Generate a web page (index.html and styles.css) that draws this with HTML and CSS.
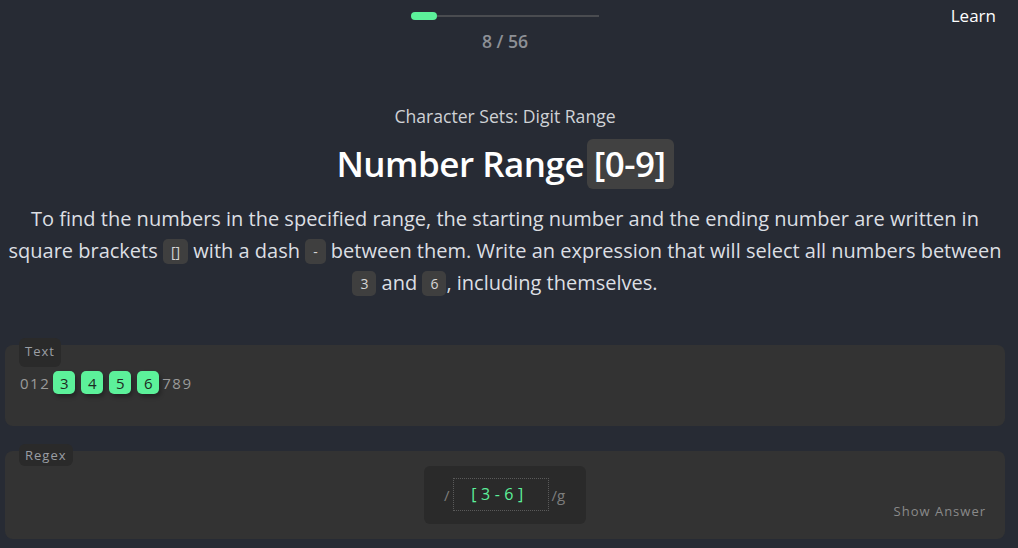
FILE: index.html
```html
<!DOCTYPE html>
<html>
<head>
<meta charset="utf-8">
<link rel="stylesheet" href="styles.css">
</head>
<body>
<header class="top">
  <div class="progress">
    <div class="track"><div class="fill" style="width:14%"></div></div>
    <div class="count">8 / 56</div>
  </div>
  <a class="learn">Learn</a>
</header>
<main class="lesson">
  <div class="subtitle">Character Sets: Digit Range</div>
  <h1 class="title">Number Range <code class="title-code">[0-9]</code></h1>
  <p class="desc">To find the numbers in the specified range, the starting number and the ending number are written in square brackets <code class="chip">[]</code> with a dash <code class="chip">-</code> between them. Write an expression that will select all numbers between <code class="chip">3</code> and <code class="chip">6</code>, including themselves.</p>
</main>
<section class="panel text-panel">
  <span class="label">Text</span>
  <div class="sample">012<mark class="hit">3</mark><mark class="hit">4</mark><mark class="hit">5</mark><mark class="hit">6</mark>789</div>
</section>
<section class="panel regex-panel">
  <span class="label">Regex</span>
  <div class="regex-box">
    <span class="slash">/</span>
    <span class="input">[3-6]</span>
    <span class="flags">/g</span>
  </div>
  <span class="show">Show Answer</span>
</section>
</body>
</html>
```

FILE: styles.css
```css
* { box-sizing: border-box; }
html, body { margin: 0; padding: 0; }
body {
  width: 1018px;
  height: 548px;
  overflow: hidden;
  background: #272b34;
  font-family: "Open Sans", "Noto Sans", sans-serif;
  color: #e6e6e6;
}
.top {
  position: relative;
  height: 70px;
  display: flex;
  justify-content: center;
  padding-right: 8px;
}
.progress {
  width: 188px;
  padding-top: 12px;
  display: flex;
  flex-direction: column;
  align-items: center;
}
.track {
  width: 100%;
  height: 2px;
  margin-top: 3px;
  background: #4a4c50;
  position: relative;
}
.fill {
  position: absolute;
  left: 0;
  top: -3px;
  height: 8px;
  border-radius: 4px;
  background: #5cf19a;
}
.count {
  margin-top: 12px;
  font-size: 17.6px;
  font-weight: 600;
  color: #8d9096;
}
.learn {
  position: absolute;
  right: 22px;
  top: 4px;
  font-size: 17px;
  color: #ffffff;
}
.lesson {
  padding: 33px 8px 0 0;
  text-align: center;
}
.subtitle {
  font-size: 17.6px;
  color: #cfd2d6;
  line-height: 26px;
}
.title {
  margin: 9px 0 0;
  font-size: 35px;
  font-weight: 600;
  color: #ffffff;
  line-height: 52px;
  letter-spacing: -0.5px;
}
.title-code {
  font-family: "Open Sans", sans-serif;
  font-weight: 600;
  background: #414141;
  border-radius: 6px;
  padding: 0 8px 0 7px;
  margin-left: -6px;
  display: inline-block;
  line-height: 50px;
}
.desc {
  margin: 13px 0 0;
  font-size: 20px;
  line-height: 31.5px;
  color: #dcdfe3;
}
.chip {
  font-family: "Open Sans", sans-serif;
  font-size: 14px;
  background: #3f3f3f;
  border-radius: 5px;
  padding: 3px 8px;
  color: #d6d6d6;
  vertical-align: 1px;
}
.panel {
  position: relative;
  margin: 0 13px 0 5px;
  background: #333333;
  border-radius: 8px;
}
.text-panel {
  margin-top: 45px;
  height: 81px;
  padding: 26px 15px 0;
}
.regex-panel {
  margin-top: 25px;
  height: 88px;
  display: flex;
  justify-content: center;
  padding-top: 15px;
}
.label {
  position: absolute;
  left: 14px;
  top: -7px;
  background: #2a2a2a;
  border-radius: 6px;
  padding: 0 6px;
  height: 29px;
  line-height: 27px;
  font-size: 13px;
  letter-spacing: 1px;
  color: #9a9ea4;
}
.regex-panel .label { top: -7px; height: 22px; line-height: 22px; }
.sample {
  font-size: 15px;
  letter-spacing: 1.5px;
  color: #9a9a9a;
  line-height: 24px;
}
.hit {
  display: inline-block;
  background: #5cf19a;
  color: #1e2a22;
  border-radius: 5px;
  width: 22px;
  height: 23px;
  text-align: center;
  letter-spacing: 0;
  margin: 0 3px 0 3px;
  box-shadow: 2px 3px 4px rgba(0,0,0,0.3);
}
.regex-box {
  width: 162px;
  height: 58px;
  background: #2a2a2a;
  border-radius: 6px;
  display: flex;
  align-items: center;
  padding-left: 20px;
}
.slash, .flags {
  font-size: 15px;
  color: #7d7d7d;
}
.input {
  margin-left: 3px;
  width: 96px;
  height: 33px;
  border: 1px dotted #5a5a5a;
  text-align: center;
  line-height: 31px;
  font-family: "Open Sans", sans-serif;
  font-size: 16px;
  letter-spacing: 4.5px;
  padding-right: 2px;
  color: #5cf19a;
}
.flags { margin-left: 3px; }
.show {
  position: absolute;
  right: 19px;
  bottom: 19px;
  font-size: 13px;
  letter-spacing: 1px;
  color: #8a8a8a;
}
```
